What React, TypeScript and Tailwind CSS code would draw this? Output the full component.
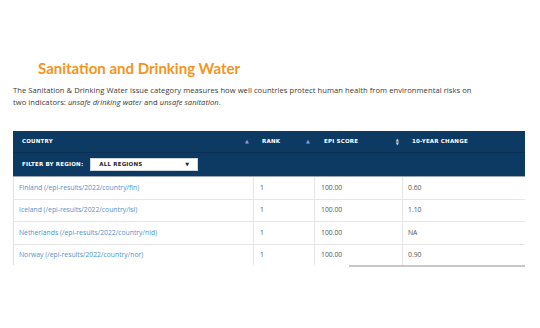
import { FC } from 'react';

const rows = [
  { name: 'Finland', slug: 'fin', rank: '1', score: '100.00', change: '0.60' },
  { name: 'Iceland', slug: 'isl', rank: '1', score: '100.00', change: '1.10' },
  { name: 'Netherlands', slug: 'nld', rank: '1', score: '100.00', change: 'NA' },
  { name: 'Norway', slug: 'nor', rank: '1', score: '100.00', change: '0.90' },
];

const headFont = { fontFamily: '"DejaVu Sans", sans-serif' };

const SortUp: FC = () => <span className="text-[5px] leading-none text-[#8a9fd8]">▲</span>;

const SortBoth: FC = () => (
  <span className="flex flex-col text-[4px] leading-[4px] text-[#c9d3e6]">
    <span>▲</span>
    <span>▼</span>
  </span>
);

const App: FC = () => {
  return (
    <div className="w-[540px] h-[328px] bg-white overflow-hidden" style={{ fontFamily: 'Lato, sans-serif' }}>
      <div className="px-[13px] pt-[58px]">
        <h1 className="ml-[25px] text-[15px] font-bold leading-[20px] text-[#f7941d]">
          Sanitation and Drinking Water
        </h1>
        <p className="mt-[6px] text-[8.2px] leading-[12px] text-[#3a3a3a]" style={{ fontFamily: '"Open Sans", sans-serif', fontSize: '7.6px', letterSpacing: '0.05px' }}>
          The Sanitation &amp; Drinking Water issue category measures how well countries protect human health from environmental risks on
          <br />
          two indicators: <i className="font-normal">unsafe drinking water</i> and <i className="font-normal">unsafe sanitation</i>.
        </p>

        <div className="mt-[23px] w-[512px]">
          <div className="bg-[#0d3a62] text-white font-bold text-[5.5px] tracking-[0.2px]" style={headFont}>
            <div className="flex h-[22px] items-center border-b border-[#0a3153]">
              <div className="w-[240px] flex items-center justify-between pl-[9px] pr-[4px]">
                <span>COUNTRY</span>
                <SortUp />
              </div>
              <div className="w-[61px] flex items-center justify-between pl-[9px] pr-[4px]">
                <span>RANK</span>
                <SortUp />
              </div>
              <div className="w-[88px] flex items-center justify-between pl-[10px] pr-[3px]">
                <span>EPI SCORE</span>
                <SortBoth />
              </div>
              <div className="flex-1 pl-[10px]">10-YEAR CHANGE</div>
            </div>
            <div className="flex h-[24px] items-center pl-[9px] border-b border-[#9aa5b1]">
              <span>FILTER BY REGION:</span>
              <div className="ml-[7px] w-[108px] h-[13px] bg-white text-[#1b2a3a] flex items-center justify-between px-[8px] border border-[#cfd6de]">
                <span>ALL REGIONS</span>
                <span className="text-[5px]">▼</span>
              </div>
            </div>
          </div>

          <div className="h-[88px] overflow-hidden border-l border-[#e2e2e2]" style={{ fontFamily: '"Open Sans", sans-serif' }}>
            {rows.map((r) => (
              <div key={r.slug} className="flex h-[22.5px] items-center border-b border-[#e6e6e6] text-[6.8px]">
                <div className="w-[240px] h-full flex items-center pl-[5px] text-[#4f93d0] border-r border-[#e6e6e6]">
                  {r.name} (/epi-results/2022/country/{r.slug})
                </div>
                <div className="w-[61px] h-full flex items-center pl-[6px] text-[#555] border-r border-[#e6e6e6]">{r.rank}</div>
                <div className="w-[88px] h-full flex items-center pl-[6px] text-[#555] border-r border-[#e6e6e6]">{r.score}</div>
                <div className="flex-1 h-full flex items-center pl-[5px] text-[#555]">{r.change}</div>
              </div>
            ))}
          </div>
          <div className="ml-[336px] h-[2px] bg-[#c8c8c8]" />
        </div>
      </div>
    </div>
  );
};

export default App;
